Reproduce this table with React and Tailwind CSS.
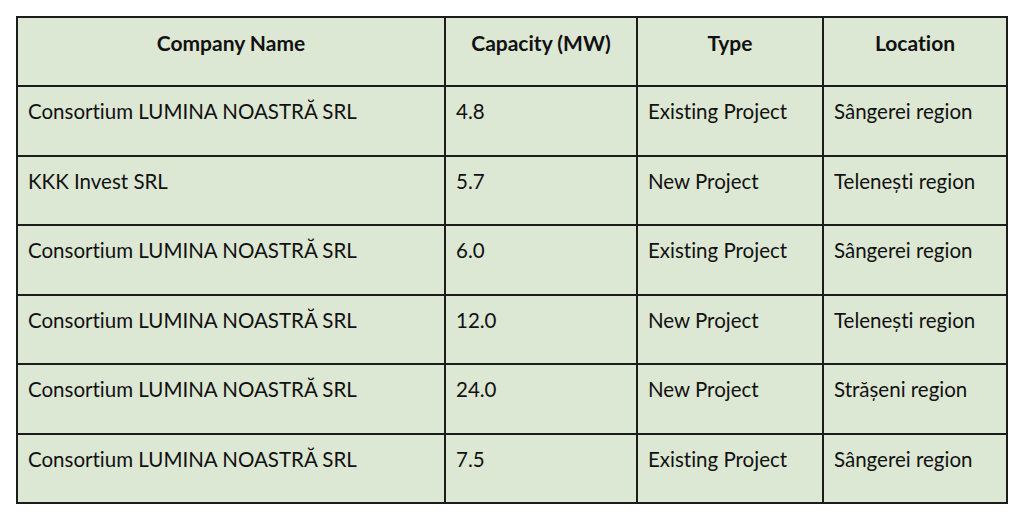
const rows = [
  ['Consortium LUMINA NOASTRĂ SRL', '4.8', 'Existing Project', 'Sângerei region'],
  ['KKK Invest SRL', '5.7', 'New Project', 'Telenești region'],
  ['Consortium LUMINA NOASTRĂ SRL', '6.0', 'Existing Project', 'Sângerei region'],
  ['Consortium LUMINA NOASTRĂ SRL', '12.0', 'New Project', 'Telenești region'],
  ['Consortium LUMINA NOASTRĂ SRL', '24.0', 'New Project', 'Strășeni region'],
  ['Consortium LUMINA NOASTRĂ SRL', '7.5', 'Existing Project', 'Sângerei region'],
];

const headers = ['Company Name', 'Capacity (MW)', 'Type', 'Location'];

export default function App() {
  return (
    <div className="bg-white w-[1024px] h-[521px] pt-4 pl-4 font-['Lato',sans-serif] text-[#111] [font-variant-ligatures:none]">
      <table className="border-collapse table-fixed w-[990px] bg-[#dde8d4]">
        <colgroup>
          <col className="w-[428px]" />
          <col className="w-[192px]" />
          <col className="w-[186px]" />
          <col className="w-[184px]" />
        </colgroup>
        <thead>
          <tr className="h-[69px]">
            {headers.map((h) => (
              <th key={h} className="border-2 border-[#1c1c1c] align-top pt-[9px] px-[10px] text-[21px] font-bold text-center">
                {h}
              </th>
            ))}
          </tr>
        </thead>
        <tbody>
          {rows.map((r, i) => (
            <tr key={i} className="h-[69.5px]">
              {r.map((c, j) => (
                <td key={j} className="border-2 border-[#1c1c1c] align-top pt-[9px] px-[10px] text-[20.5px] text-left whitespace-nowrap">
                  {c}
                </td>
              ))}
            </tr>
          ))}
        </tbody>
      </table>
    </div>
  );
}
